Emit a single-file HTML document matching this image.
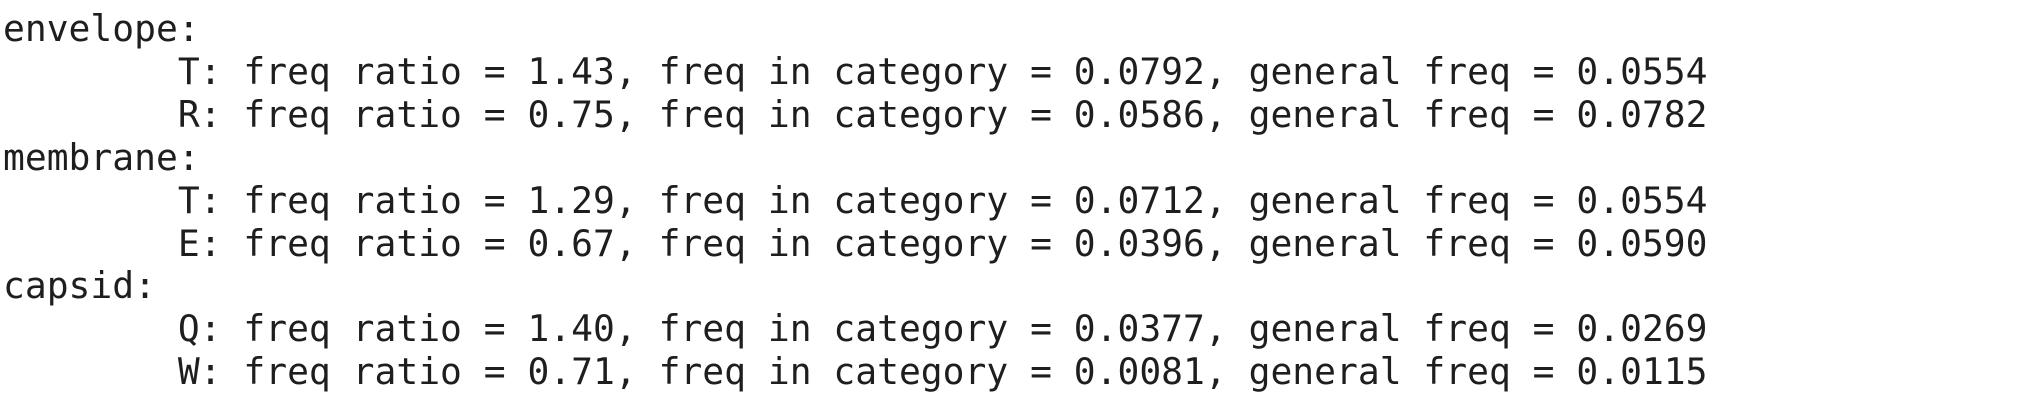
<!DOCTYPE html>
<html><head><meta charset="utf-8"><style>
html,body{margin:0;padding:0;background:#fff;width:2020px;height:408px;overflow:hidden}
pre{margin:0;padding:8px 0 0 3px;font-family:"DejaVu Sans Mono","Liberation Mono",monospace;font-size:36.3px;line-height:42.9px;color:#1e1e1e;tab-size:8}
</style></head><body><pre>envelope:
        T: freq ratio = 1.43, freq in category = 0.0792, general freq = 0.0554
        R: freq ratio = 0.75, freq in category = 0.0586, general freq = 0.0782
membrane:
        T: freq ratio = 1.29, freq in category = 0.0712, general freq = 0.0554
        E: freq ratio = 0.67, freq in category = 0.0396, general freq = 0.0590
capsid:
        Q: freq ratio = 1.40, freq in category = 0.0377, general freq = 0.0269
        W: freq ratio = 0.71, freq in category = 0.0081, general freq = 0.0115</pre></body></html>
